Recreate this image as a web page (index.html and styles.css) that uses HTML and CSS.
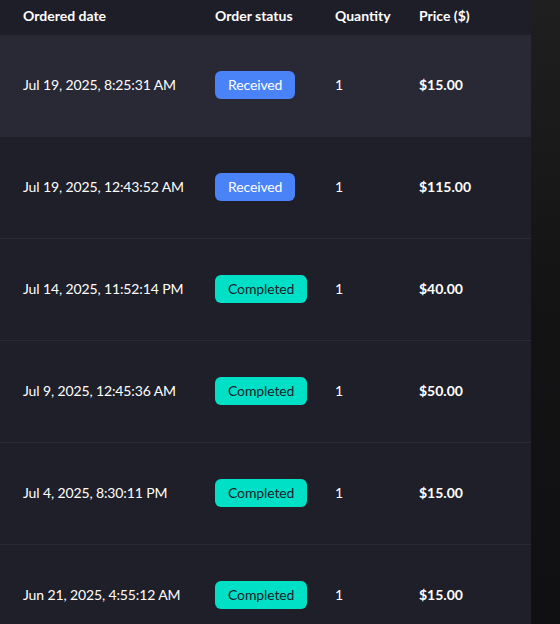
FILE: index.html
```html
<!DOCTYPE html>
<html lang="en">
<head>
<meta charset="utf-8">
<title>Orders</title>
<link rel="stylesheet" href="styles.css">
</head>
<body>
<div class="page">
  <div class="orders">
    <div class="row head">
      <div class="cell">Ordered date</div>
      <div class="cell">Order status</div>
      <div class="cell">Quantity</div>
      <div class="cell">Price ($)</div>
    </div>
    <div class="row item hover">
      <div class="cell date">Jul 19, 2025, 8:25:31 AM</div>
      <div class="cell"><span class="badge received">Received</span></div>
      <div class="cell">1</div>
      <div class="cell price">$15.00</div>
    </div>
    <div class="row item">
      <div class="cell date">Jul 19, 2025, 12:43:52 AM</div>
      <div class="cell"><span class="badge received">Received</span></div>
      <div class="cell">1</div>
      <div class="cell price">$115.00</div>
    </div>
    <div class="row item">
      <div class="cell date">Jul 14, 2025, 11:52:14 PM</div>
      <div class="cell"><span class="badge completed">Completed</span></div>
      <div class="cell">1</div>
      <div class="cell price">$40.00</div>
    </div>
    <div class="row item">
      <div class="cell date">Jul 9, 2025, 12:45:36 AM</div>
      <div class="cell"><span class="badge completed">Completed</span></div>
      <div class="cell">1</div>
      <div class="cell price">$50.00</div>
    </div>
    <div class="row item">
      <div class="cell date">Jul 4, 2025, 8:30:11 PM</div>
      <div class="cell"><span class="badge completed">Completed</span></div>
      <div class="cell">1</div>
      <div class="cell price">$15.00</div>
    </div>
    <div class="row item">
      <div class="cell date">Jun 21, 2025, 4:55:12 AM</div>
      <div class="cell"><span class="badge completed">Completed</span></div>
      <div class="cell">1</div>
      <div class="cell price">$15.00</div>
    </div>
  </div>
  <div class="side"></div>
</div>
</body>
</html>
```
FILE: styles.css
```css
html, body {
  margin: 0;
  padding: 0;
  height: 100%;
  overflow: hidden;
}
body {
  background: #111113;
  font-family: Lato, "Open Sans", sans-serif;
  color: #ffffff;
}
.page {
  display: flex;
  height: 624px;
}
.orders {
  width: 531px;
  flex: 0 0 531px;
  background: #1f1f29;
  overflow: hidden;
}
.side {
  flex: 1;
  background: linear-gradient(to bottom, #1f1f1f 0%, #131314 50%, #101012 100%);
}
.row {
  display: grid;
  grid-template-columns: 192px 120px 84px 1fr;
  padding-left: 23px;
  align-items: center;
}
.head {
  height: 31px;
  padding-bottom: 4px;
  background: #1e1e29;
  font-weight: 700;
  font-size: 14px;
}
.item {
  height: 99px;
  padding-bottom: 2px;
  border-bottom: 1px solid #2a2a36;
  font-size: 14px;
}
.item.hover {
  background: #292936;
  border-bottom-color: #292936;
}
.date {
  letter-spacing: -0.12px;
}
.price {
  font-weight: 700;
}
.badge {
  display: inline-block;
  height: 28px;
  line-height: 28px;
  padding: 0 13px;
  border-radius: 6px;
  font-size: 14px;
  letter-spacing: -0.12px;
  box-sizing: border-box;
}
.received {
  background: #4a83f7;
  color: #ffffff;
}
.completed {
  background: #00e0c6;
  color: #16202a;
}
```
